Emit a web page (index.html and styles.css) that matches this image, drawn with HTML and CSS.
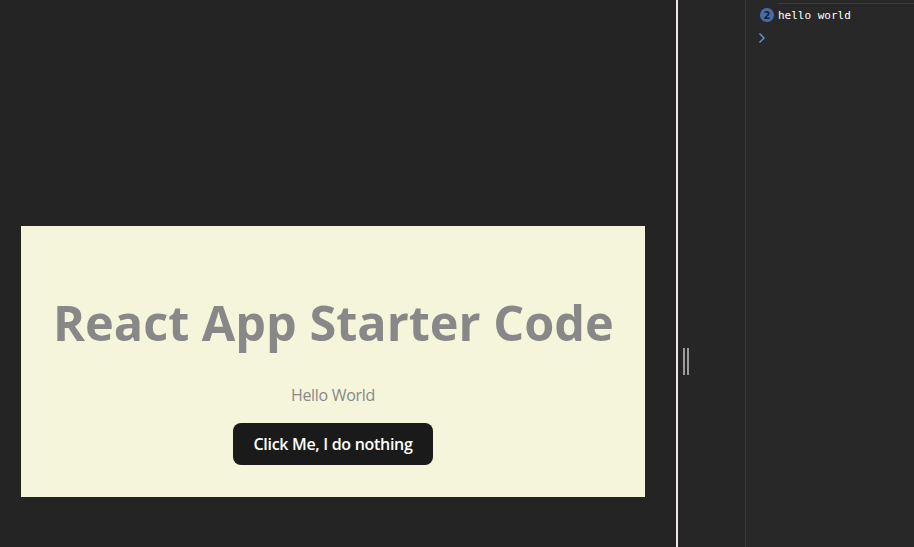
FILE: index.html
```html
<!DOCTYPE html>
<html>
<head>
<meta charset="utf-8">
<link rel="stylesheet" href="styles.css">
</head>
<body>
<div class="layout">
  <main class="app-pane">
    <div class="card">
      <h1 class="title">React App Starter Code</h1>
      <p class="subtitle">Hello World</p>
      <button class="btn">Click Me, I do nothing</button>
    </div>
  </main>
  <div class="splitter"></div>
  <div class="gutter">
    <div class="grip"><span></span><span></span></div>
  </div>
  <aside class="console">
    <div class="log-row">
      <span class="badge">2</span>
      <span class="msg">hello world</span>
    </div>
    <div class="prompt">
      <svg width="8" height="12" viewBox="0 0 8 12"><path d="M1.5 1.5 L6 6 L1.5 10.5" fill="none" stroke="#6b93d6" stroke-width="1.4"/></svg>
    </div>
  </aside>
</div>
</body>
</html>
```
FILE: styles.css
```css
* { box-sizing: border-box; }
html, body { margin: 0; padding: 0; height: 100%; }
body { background: #242424; font-family: "Open Sans", "Noto Sans", sans-serif; }
.layout { display: flex; height: 547px; width: 914px; overflow: hidden; }
.app-pane { width: 676px; flex: none; background: #242424; padding: 226px 0 0 21px; }
.card {
  width: 624px;
  background: #f5f5dc;
  padding: 32px;
  text-align: center;
}
.title {
  margin: 0 0 32px;
  padding-top: 35px;
  font-size: 48.6px;
  line-height: 58px;
  font-weight: 700;
  color: #888888;
  white-space: nowrap;
  letter-spacing: 0;
}
.subtitle {
  margin: 0 0 16px;
  font-size: 16px;
  line-height: 24px;
  color: #888888;
  letter-spacing: -0.3px;
}
.btn {
  font-family: "Open Sans", "Noto Sans", sans-serif;
  background: #1a1a1a;
  color: #ffffff;
  border: 1px solid transparent;
  border-radius: 8px;
  padding: 9px 19px;
  font-size: 16px;
  line-height: 22px;
  font-weight: 600;
  width: 200px;
  height: 42px;
  letter-spacing: -0.3px;
}
.splitter { width: 2px; flex: none; background: #f2e4e4; }
.gutter {
  width: 68px; flex: none; background: #262626;
  border-right: 1px solid #3a3a3a;
  display: flex; align-items: flex-start;
  padding: 348px 0 0 5px;
}
.grip { display: flex; gap: 2px; }
.grip span { display: block; width: 2px; height: 27px; background: #9c9c9c; }
.console { flex: 1; background: #282828; padding-top: 3px; position: relative; }
.log-row {
  margin-left: 32px;
  border-top: 1px solid #3c3c3c;
  height: 21px;
  display: flex; align-items: center;
  position: relative;
}
.badge {
  position: absolute; left: -18px; top: 4px;
  width: 14px; height: 14px; border-radius: 50%;
  background: #4a6ca6; color: #12203a;
  font-family: "DejaVu Sans", sans-serif; font-size: 10px; font-weight: 700;
  display: flex; align-items: center; justify-content: center;
}
.msg {
  font-family: "DejaVu Sans Mono", monospace; font-size: 11px; color: #ffffff;
  padding-top: 3px;
}
.prompt { padding: 8px 0 0 12px; height: 20px; }
.prompt svg { display: block; }
```
